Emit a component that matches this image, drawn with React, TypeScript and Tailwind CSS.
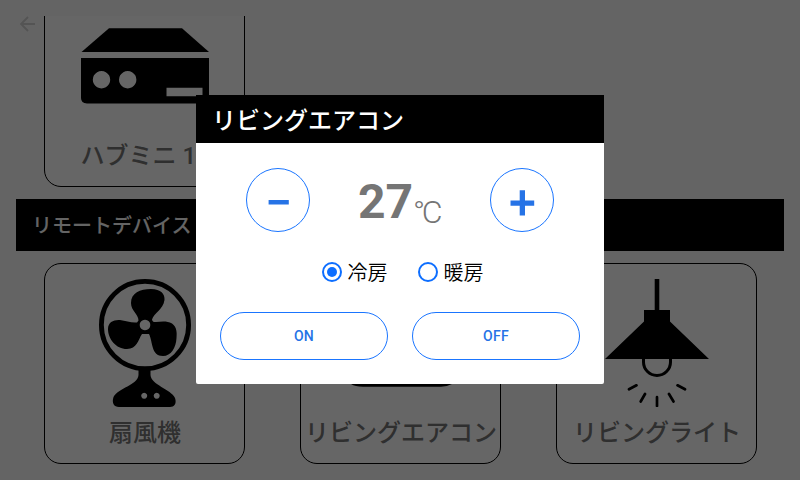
import React, { useState } from "react";

const jp = "font-['Roboto','Noto_Sans_CJK_JP',sans-serif]";

function HubIcon() {
  return (
    <svg className="h-32 w-32" viewBox="0 -13 128 128" fill="black">
      <path d="M0.500 37 28 13.300H101L128 37Z" />
      <path
        fillRule="evenodd"
        d="M0 43H128V84Q128 88.500 123 88.500H6Q0 88 0 83ZM20.500 56a8.700 8.700 0 1 0 .01 0ZM46.700 56a8.700 8.700 0 1 0 .01 0ZM85.500 72.800V81.300H121.500V72.800Z"
      />
    </svg>
  );
}

function FanIcon() {
  return (
    <svg className="h-32 w-32" viewBox="0 0 128 128" fill="black">
      <circle cx="64" cy="46" r="43.600" fill="none" stroke="black" strokeWidth="4.800" />
      <path
        fillRule="evenodd"
        d="M57.500 41.500C57.500 35 50 32 50 24C50 14 59 10 70 10C80 10 84 15 83.500 21C82 31 73 34 71 40.500C71.500 43 73 43.300 75 43C80 42.500 86 41.500 91 44.500C96 48 96 54 95.500 59C95 69 90 77 82 77C70 77 72 63 68 55H61C57 61 56 70 46 70C35 70 27 60 27 50C27 43 33 40.500 39 41C45 42 50 44 56 43.500ZM64 40.700a5.300 5.300 0 1 0 .01 0Z"
      />
      <path
        fillRule="evenodd"
        d="M57.500 90H69.500V96C70 106 90 110 94 119C96 125 93 128 89 128H38C33 128 30.500 124 32.500 118C37 109 57 106 57.500 96ZM63.200 113.700a3 3 0 1 0 .01 0ZM75.700 113.700a3 3 0 1 0 .01 0Z"
      />
    </svg>
  );
}

function AirconIcon() {
  return (
    <svg className="h-32 w-32" viewBox="0 0 128 128" fill="black">
      <rect x="3" y="40" width="122" height="48" rx="8" />
      <path d="M14 100H115V105Q110 107.700 104 107.700H26Q18 107.700 14 105Z" />
    </svg>
  );
}

function LampIcon() {
  return (
    <svg className="h-32 w-32" viewBox="0 0 128 128" fill="black">
      <path d="M61.700 0H66.300V31H77V42.500L116 80H12L51 42.500V31H61.700Z" />
      <path
        d="M50.500 79V83a13.500 13.500 0 0 0 27 0V79"
        fill="none"
        stroke="black"
        strokeWidth="3"
      />
      <path
        d="M43.500 106.300 36 110.300M52 115 47.700 122.500M64 118.200V127M76 115 80.500 122.500M84.500 106.300 92 110.300"
        fill="none"
        stroke="black"
        strokeWidth="2.700"
        strokeLinecap="round"
      />
    </svg>
  );
}

function DeviceCard({ name, children }: { name: string; children: React.ReactNode }) {
  return (
    <div className="flex h-[201px] w-[201px] flex-col items-center rounded-[17px] border border-black bg-white pt-[15px]">
      {children}
      <div className="mt-2 h-9 pl-px text-2xl leading-9 font-medium whitespace-nowrap text-[#757575]">
        {name}
      </div>
    </div>
  );
}

function RoundButton({ label, path, onClick }: { label: string; path: string; onClick: () => void }) {
  return (
    <button
      aria-label={label}
      onClick={onClick}
      className="h-16 w-16 rounded-full border border-[#1a75ff] text-[#2673e6]"
    >
      <svg viewBox="0 0 62 62" fill="currentColor">
        <path d={path} />
      </svg>
    </button>
  );
}

function ModeRadio({ label, checked, onClick }: { label: string; checked: boolean; onClick: () => void }) {
  return (
    <button role="radio" aria-checked={checked} onClick={onClick} className="flex items-center gap-1.5">
      <span className="flex h-5 w-5 items-center justify-center rounded-full border-2 border-[#0d6eff]">
        {checked && <span className="h-2.5 w-2.5 rounded-full bg-[#0d6eff]" />}
      </span>
      <span className="pt-0.5 text-xl leading-8 font-[350] text-black">{label}</span>
    </button>
  );
}

function PowerButton({ label }: { label: string }) {
  return (
    <button className="h-12 flex-1 rounded-full border border-[#1a75ff] text-sm font-medium tracking-[0.3px] text-[#2673e6]">
      {label}
    </button>
  );
}

export default function App() {
  const [temp, setTemp] = useState(27);
  const [mode, setMode] = useState("冷房");
  return (
    <div lang="ja" className={`relative h-[480px] w-[800px] overflow-hidden bg-[#fafafa] antialiased ${jp}`}>
      <main className="flex h-full flex-col px-4 pt-4">
        <div className="flex h-[171px] items-end overflow-hidden pl-7">
          <DeviceCard name="ハブミニ 1F">
            <HubIcon />
          </DeviceCard>
        </div>
        <h2 className="mt-3 h-[52px] bg-black pt-px pl-4 text-xl leading-[52px] font-medium text-[#fafafa]">
          リモートデバイス
        </h2>
        <div className="mt-3 flex gap-[55px] pl-7">
          <DeviceCard name="扇風機">
            <FanIcon />
          </DeviceCard>
          <DeviceCard name="リビングエアコン">
            <AirconIcon />
          </DeviceCard>
          <DeviceCard name="リビングライト">
            <LampIcon />
          </DeviceCard>
        </div>
      </main>
      <svg
        className="absolute top-[14px] left-[17px] h-5 w-5"
        viewBox="0 0 20 20"
        fill="none"
        stroke="#d2d2d2"
        strokeWidth="1.800"
      >
        <path d="M18 10H4M11 3 4 10l7 7" />
      </svg>

      <div className="absolute inset-0 flex items-start justify-center bg-black/60 pt-[95px]">
        <section className="h-[289px] w-[408px] overflow-hidden rounded-b-[2px] bg-white">
          <h1 className="h-12 bg-black pt-0.5 pl-4 text-2xl leading-[49px] font-medium text-white">
            リビングエアコン
          </h1>
          <div className="flex items-center justify-between px-[50px] pt-[25px]">
            <RoundButton label="温度を下げる" path="M21.600 31H41.800V35.500H21.600Z" onClick={() => setTemp(temp - 1)} />
            <div className="flex h-16 w-[84px] items-center text-[#757575]">
              <span className="pt-1 text-5xl leading-[64px] font-bold">{temp}</span>
              <span className="mt-[23px] text-[32px] leading-8 font-[350] tracking-[-3.3px]">°C</span>
            </div>
            <RoundButton
              label="温度を上げる"
              path="M28.700 21.300H34V31.500H43.200V36.700H34V46.500H28.700V36.700H19.500V31.500H28.700Z"
              onClick={() => setTemp(temp + 1)}
            />
          </div>
          <div className="mt-6 flex h-8 justify-center gap-[30px] pl-[5px]">
            <ModeRadio label="冷房" checked={mode === "冷房"} onClick={() => setMode("冷房")} />
            <ModeRadio label="暖房" checked={mode === "暖房"} onClick={() => setMode("暖房")} />
          </div>
          <div className="mt-6 flex gap-6 px-6">
            <PowerButton label="ON" />
            <PowerButton label="OFF" />
          </div>
        </section>
      </div>
    </div>
  );
}
